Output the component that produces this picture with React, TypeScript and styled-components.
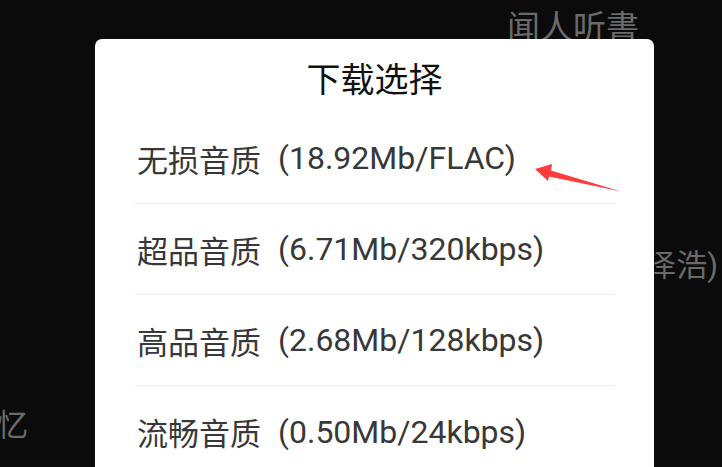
import React from "react";
import styled, { createGlobalStyle } from "styled-components";

interface QualityOption {
  name: string;
  size: string;
}

const options: QualityOption[] = [
  { name: "无损音质", size: "(18.92Mb/FLAC)" },
  { name: "超品音质", size: "(6.71Mb/320kbps)" },
  { name: "高品音质", size: "(2.68Mb/128kbps)" },
  { name: "流畅音质", size: "(0.50Mb/24kbps)" },
];

const App = () => {
  return (
    <>
      <GlobalStyle />
      <Page>
        <TopLine>闻人听書</TopLine>
        <SingerLine>演唱：张泽浩)</SingerLine>
        <BottomLine>忆</BottomLine>
      </Page>
      <Dialog>
        <DialogTitle>下载选择</DialogTitle>
        <OptionList>
          {options.map((option, index) => (
            <OptionRow key={option.name} $last={index === options.length - 1}>
              <OptionName>{option.name}</OptionName>
              <OptionSize>{option.size}</OptionSize>
            </OptionRow>
          ))}
        </OptionList>
      </Dialog>
      <Arrow viewBox="0 0 722 467">
        <polygon
          points="535,169 552,164 551,170.5 621,191.5 549,176.5 548,181"
          fill="#ff3b3b"
        />
      </Arrow>
    </>
  );
};

export default App;

const GlobalStyle = createGlobalStyle`
  html, body {
    margin: 0;
    padding: 0;
    width: 722px;
    height: 467px;
    overflow: hidden;
    background-color: #0b0b0b;
    font-family: Roboto, "Noto Sans CJK SC", sans-serif;
  }
`;

const Page = styled.div`
  width: 722px;
  height: 467px;
  display: flex;
  flex-direction: column;
  color: #6a6a6a;
  font-size: 33px;
  line-height: 1;
`;

const TopLine = styled.div`
  padding: 11px 0 0 507px;
`;

const SingerLine = styled.div`
  margin-top: 206px;
  padding-right: 4px;
  text-align: right;
  font-size: 31px;
`;

const BottomLine = styled.div`
  margin-top: 129px;
  margin-left: -3px;
  font-size: 31px;
`;

const Dialog = styled.div`
  position: fixed;
  left: 95px;
  top: 39px;
  width: 559px;
  height: 460px;
  background-color: #ffffff;
  border-radius: 7px;
  display: flex;
  flex-direction: column;
`;

const DialogTitle = styled.div`
  height: 74px;
  display: flex;
  align-items: center;
  justify-content: center;
  padding-top: 2px;
  box-sizing: border-box;
  font-size: 34px;
  color: #111111;
`;

const OptionList = styled.div`
  display: flex;
  flex-direction: column;
  padding: 0 39px 0 40px;
`;

const OptionRow = styled.div<{ $last: boolean }>`
  height: 91px;
  display: flex;
  align-items: center;
  box-sizing: border-box;
  border-bottom: ${(p) => (p.$last ? "none" : "1px solid #ececec")};
  color: #383838;
  padding-left: 2px;
`;

const OptionName = styled.span`
  font-family: "Noto Sans CJK SC", sans-serif;
  font-size: 31px;
`;

const OptionSize = styled.span`
  margin-left: 17px;
  font-family: Roboto, sans-serif;
  font-size: 32px;
`;

const Arrow = styled.svg`
  position: fixed;
  left: 0;
  top: 0;
  width: 722px;
  height: 467px;
  pointer-events: none;
`;
